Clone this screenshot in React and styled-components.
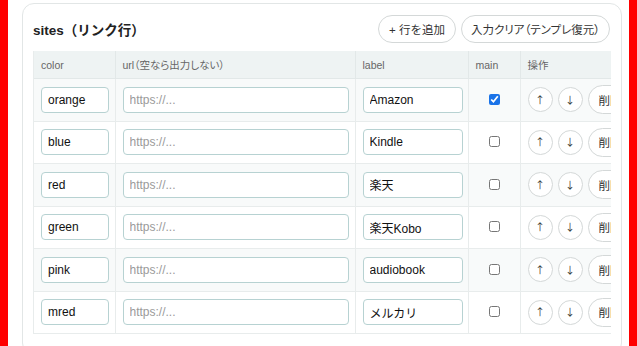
import React from 'react';
import styled, { createGlobalStyle } from 'styled-components';

const GlobalStyle = createGlobalStyle`
  html, body {
    margin: 0;
    background: #ff0000;
  }
  body {
    font-family: "Liberation Sans", "Noto Sans CJK JP", sans-serif;
    color: #222;
  }
`;

const Page = styled.div`
  margin: 0 8px;
  min-height: 346px;
  background: #fff;
  padding: 3px 7px 0 14px;
  box-sizing: border-box;
`;

const Card = styled.section`
  border: 1px solid #e2e6e6;
  border-radius: 12px;
  padding: 11px 10px 20px;
  background: #fff;
`;

const CardHead = styled.div`
  display: flex;
  align-items: center;
  justify-content: space-between;
  height: 28px;
  margin-bottom: 8px;
`;

const Title = styled.h2`
  margin: 0;
  font-size: 13.5px;
  font-weight: 700;
  color: #222;
`;

const Actions = styled.div`
  display: flex;
  gap: 5px;
  margin-right: 1px;
`;

const PillButton = styled.button`
  height: ${({ $h }) => $h || 28}px;
  padding: 0 ${({ $pad }) => $pad || 10}px;
  border: 1px solid #d4d8d8;
  border-radius: 999px;
  background: #fff;
  color: #333;
  font: inherit;
  font-size: 11.5px;
  font-feature-settings: ${({ $palt }) => ($palt ? '"palt"' : 'normal')};
  white-space: nowrap;
  cursor: pointer;
`;

const RoundButton = styled.button`
  display: flex;
  align-items: center;
  justify-content: center;
  width: 25px;
  height: 25px;
  padding: 0;
  border: 1px solid #d4d8d8;
  border-radius: 50%;
  background: #fff;
  color: #333;
  font-family: "Noto Sans CJK JP", sans-serif;
  font-weight: 400;
  font-size: 10px;
  line-height: 1;
`;

const TableWrap = styled.div`
  overflow: hidden;
  border-left: 1px solid #e8ecec;
`;

const Table = styled.table`
  border-collapse: collapse;
  table-layout: fixed;
  width: 620px;
`;

const Th = styled.th`
  height: 27px;
  padding: 0 7px;
  background: #eef3f3;
  border-right: 1px solid #e2e8e8;
  border-bottom: 1px solid #e2e8e8;
  text-align: left;
  font-size: 10.5px;
  font-weight: 400;
  font-feature-settings: "palt";
  color: #666;
  white-space: nowrap;
`;

const Row = styled.tr`
  &:nth-child(odd) td {
    background: #f8fafa;
  }
`;

const Td = styled.td`
  height: 41.5px;
  padding: 0 7px;
  border-right: 1px solid #e8ecec;
  border-bottom: 1px solid #e8ecec;
  text-align: ${({ $center }) => ($center ? 'center' : 'left')};
  vertical-align: middle;
`;

const Input = styled.input`
  box-sizing: border-box;
  width: ${({ $w }) => $w}px;
  height: 26px;
  padding: 0 6px;
  border: 1px solid #b7d2d2;
  border-radius: 4px;
  background: #fff;
  color: #111;
  font: inherit;
  font-size: 12px;
  outline: none;

  &::placeholder {
    color: #9a9a9a;
  }
`;

const Check = styled.input`
  width: 11px;
  height: 11px;
  margin: 0;
  accent-color: #1a73e8;
`;

const Ops = styled.div`
  display: flex;
  align-items: center;
  gap: 5px;
`;

const rows = [
  { color: 'orange', label: 'Amazon', main: true },
  { color: 'blue', label: 'Kindle' },
  { color: 'red', label: '楽天' },
  { color: 'green', label: '楽天Kobo' },
  { color: 'pink', label: 'audiobook' },
  { color: 'mred', label: 'メルカリ' },
];

const App = () => (
  <>
    <GlobalStyle />
    <Page>
      <Card>
        <CardHead>
          <Title>sites（リンク行）</Title>
          <Actions>
            <PillButton $pad={10}>+ 行を追加</PillButton>
            <PillButton $pad={9} $palt>入力クリア（テンプレ復元）</PillButton>
          </Actions>
        </CardHead>

        <TableWrap>
          <Table>
            <colgroup>
              <col style={{ width: 81 }} />
              <col style={{ width: 240 }} />
              <col style={{ width: 113 }} />
              <col style={{ width: 52 }} />
              <col style={{ width: 134 }} />
            </colgroup>
            <thead>
              <tr>
                <Th>color</Th>
                <Th>url（空なら出力しない）</Th>
                <Th>label</Th>
                <Th>main</Th>
                <Th>操作</Th>
              </tr>
            </thead>
            <tbody>
              {rows.map((r) => (
                <Row key={r.color}>
                  <Td>
                    <Input $w={68} defaultValue={r.color} />
                  </Td>
                  <Td>
                    <Input $w={226} placeholder="https://..." />
                  </Td>
                  <Td>
                    <Input $w={100} defaultValue={r.label} />
                  </Td>
                  <Td $center>
                    <Check type="checkbox" defaultChecked={!!r.main} />
                  </Td>
                  <Td>
                    <Ops>
                      <RoundButton>↑</RoundButton>
                      <RoundButton>↓</RoundButton>
                      <PillButton $h={29} $pad={10}>削除</PillButton>
                    </Ops>
                  </Td>
                </Row>
              ))}
            </tbody>
          </Table>
        </TableWrap>
      </Card>
    </Page>
  </>
);

export default App;
